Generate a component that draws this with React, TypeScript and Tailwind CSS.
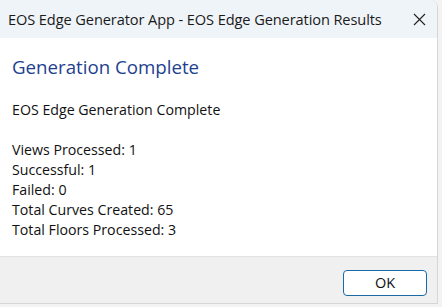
export default function App() {
  const lines = [
    "Views Processed: 1",
    "Successful: 1",
    "Failed: 0",
    "Total Curves Created: 65",
    "Total Floors Processed: 3",
  ];
  return (
    <div className="w-[442px] h-[307px] bg-[#f3f3f3] relative overflow-hidden" style={{ fontFamily: '"Open Sans", "Noto Sans", sans-serif' }}>
      <div className="w-[438px] h-[304px] bg-white rounded-tr-[8px] border-r border-b border-[#d6d6d6] flex flex-col overflow-hidden">
        <div className="h-[38px] bg-[#eff4f9] flex items-center justify-between pl-[8px] pr-[11px] shrink-0">
          <span className="text-[14.6px] text-[#1a1a1a] tracking-[-0.1px] mt-[1px]">EOS Edge Generator App - EOS Edge Generation Results</span>
          <svg width="13" height="13" viewBox="0 0 13 13">
            <path d="M1 1 L12 12 M12 1 L1 12" stroke="#222" strokeWidth="1.1" />
          </svg>
        </div>
        <div className="flex-1 bg-white px-[12px] pt-[17px]">
          <div className="text-[18.7px] text-[#1f3f8f] leading-[24px]">Generation Complete</div>
          <div className="mt-[21px] text-[14.2px] text-[#111] leading-[20px]">EOS Edge Generation Complete</div>
          <div className="mt-[20px] text-[14.2px] text-[#111] leading-[20px]">
            {lines.map((l) => (
              <div key={l}>{l}</div>
            ))}
          </div>
        </div>
        <div className="h-[47px] bg-[#f0f0f0] border-t border-[#e2e2e2] flex items-start justify-end pt-[13px] pr-[10px] shrink-0">
          <button className="w-[84px] h-[26px] rounded-[4px] border border-[#1b6aa8] bg-white text-[14.5px] text-[#111]">OK</button>
        </div>
      </div>
    </div>
  );
}
